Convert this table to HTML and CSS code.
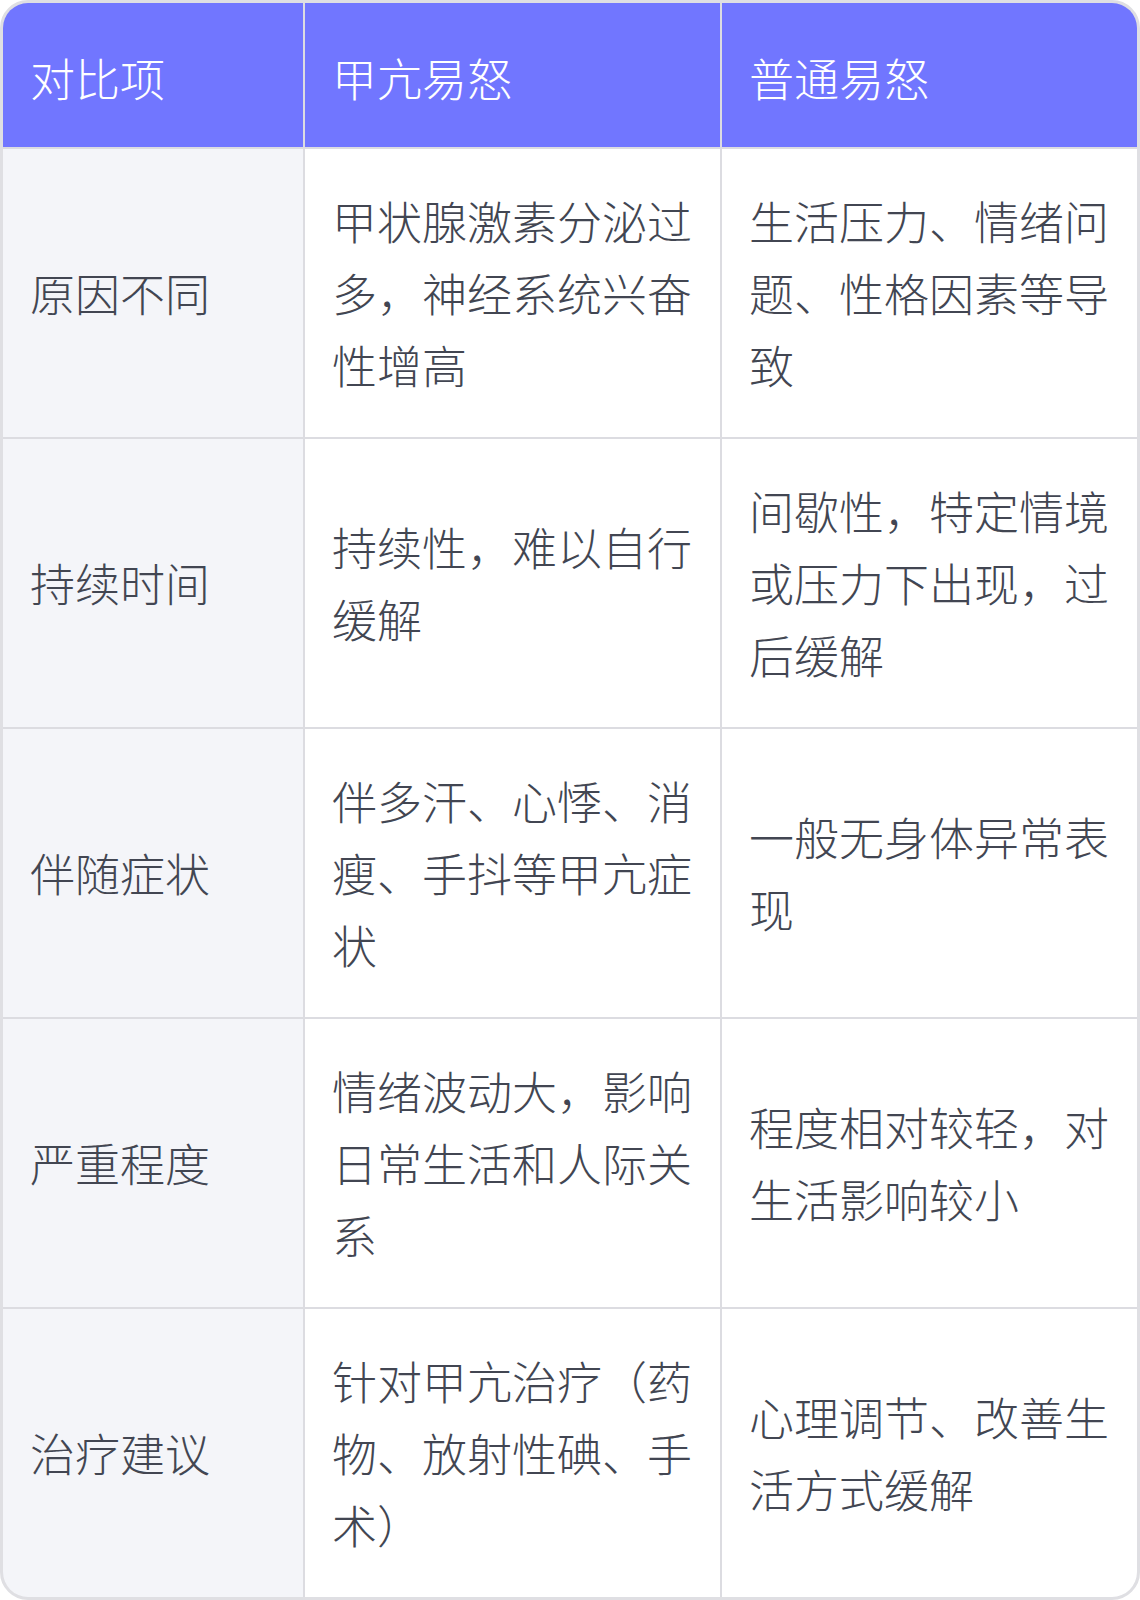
FILE: index.html
```html
<!DOCTYPE html>
<html lang="zh-CN">
<head>
<meta charset="utf-8">
<link rel="stylesheet" href="styles.css">
</head>
<body>
<div class="table">
  <div class="cell head">对比项</div>
  <div class="cell head">甲亢易怒</div>
  <div class="cell head">普通易怒</div>

  <div class="cell label">原因不同</div>
  <div class="cell">甲状腺激素分泌过多，神经系统兴奋性增高</div>
  <div class="cell">生活压力、情绪问题、性格因素等导致</div>

  <div class="cell label">持续时间</div>
  <div class="cell">持续性，难以自行缓解</div>
  <div class="cell">间歇性，特定情境或压力下出现，过后缓解</div>

  <div class="cell label">伴随症状</div>
  <div class="cell">伴多汗、心悸、消瘦、手抖等甲亢症状</div>
  <div class="cell">一般无身体异常表现</div>

  <div class="cell label">严重程度</div>
  <div class="cell">情绪波动大，影响日常生活和人际关系</div>
  <div class="cell">程度相对较轻，对生活影响较小</div>

  <div class="cell label">治疗建议</div>
  <div class="cell">针对甲亢治疗（药物、放射性碘、手术）</div>
  <div class="cell">心理调节、改善生活方式缓解</div>
</div>
</body>
</html>
```
FILE: styles.css
```css
html, body {
  margin: 0;
  padding: 0;
  background: #ffffff;
}
.table {
  width: 1140px;
  height: 1600px;
  box-sizing: border-box;
  border: 3px solid #dfdfe3;
  border-radius: 28px;
  overflow: hidden;
  background: #dcdce1;
  display: grid;
  grid-template-columns: 300px 1fr 1fr;
  grid-template-rows: 144px repeat(5, 288px);
  gap: 2px;
  font-family: "Noto Sans CJK SC", "Noto Sans", sans-serif;
  font-weight: 300;
  font-size: 45px;
  line-height: 72px;
  color: #424652;
}
.cell {
  background: #ffffff;
  padding: 36px 24px 36px 27px;
  display: flex;
  align-items: center;
  box-sizing: border-box;
}
.head {
  background: #7176ff;
  color: #ffffff;
  padding-top: 39px;
  padding-bottom: 33px;
}
.label {
  background: #f4f5f9;
}
```
